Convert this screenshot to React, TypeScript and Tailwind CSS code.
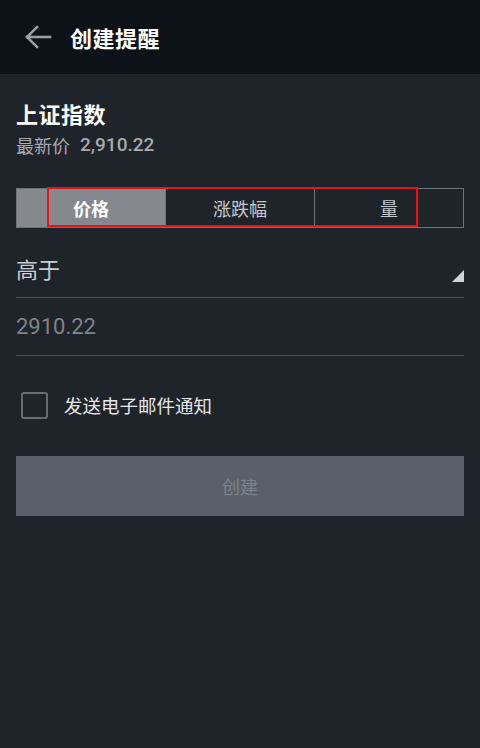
import React, { useState } from 'react'

const cjk = { fontFamily: '"Noto Sans CJK SC", "Noto Sans", sans-serif' }
const num = { fontFamily: 'Roboto, "Noto Sans CJK SC", sans-serif' }

const tabs = ['价格', '涨跌幅', '量']

export default function App() {
  const [active, setActive] = useState(0)
  const [email, setEmail] = useState(false)

  return (
    <div className="w-[480px] h-[748px] bg-[#1f242b] text-white" style={cjk}>
      {/* header */}
      <div className="h-[74px] bg-[#0d1118] flex items-center">
        <button className="ml-[22px] w-[32px] h-[32px] flex items-center justify-center">
          <svg width="28" height="26" viewBox="0 0 28 26" fill="none" stroke="#9a9ea4" strokeWidth="2.6" strokeLinecap="square">
            <path d="M3 13 H26" />
            <path d="M13 3 L3 13 L13 23" strokeLinejoin="miter" />
          </svg>
        </button>
        <h1 className="ml-[16px] text-[22px] font-bold leading-none tracking-[0.5px]">创建提醒</h1>
      </div>

      <div className="px-4">
        <div className="mt-[24px] text-[22px] font-bold leading-[30px] tracking-[0.5px]">上证指数</div>
        <div className="mt-[5px] flex items-center leading-[24px] text-[#a6a9ae]">
          <span className="text-[18px]">最新价</span>
          <span className="ml-[10px] text-[19px] font-medium" style={num}>2,910.22</span>
        </div>

        {/* segmented control */}
        <div className="relative mt-[31px] h-[40px] flex border border-[#6e737a]">
          {tabs.map((t, i) => (
            <button
              key={t}
              onClick={() => setActive(i)}
              className={
                'flex-1 flex items-center justify-center text-[18px] ' +
                (i > 0 ? 'border-l border-[#6e737a] ' : '') +
                (active === i ? 'bg-[#85898f] text-white font-bold' : 'text-[#c3c6ca]')
              }
            >
              {t}
            </button>
          ))}
          <div className="absolute left-[30px] top-[-2px] w-[371px] h-[40px] border-2 border-[#e3141a] pointer-events-none" />
        </div>

        {/* condition */}
        <div className="h-[70px] pt-[12px] flex justify-between border-b border-[#4b5158]">
          <span className="self-center text-[22px] text-[#c9ccd0]">高于</span>
          <svg className="self-end mb-[15px]" width="12" height="12" viewBox="0 0 12 12">
            <path d="M12 0 V12 H0 Z" fill="#d2d3d5" />
          </svg>
        </div>

        {/* value */}
        <div className="h-[58px] flex items-center border-b border-[#4b5158]">
          <span className="text-[22px] text-[#7e838a]" style={num}>2910.22</span>
        </div>

        {/* email */}
        <label className="mt-[36px] h-[27px] flex items-center cursor-pointer" onClick={() => setEmail(!email)}>
          <span className="ml-[5px] w-[27px] h-[27px] rounded-[3px] border-2 border-[#686d74] flex items-center justify-center">
            {email && <span className="w-[13px] h-[13px] bg-[#c9ccd0]" />}
          </span>
          <span className="ml-[16px] text-[18.5px] text-[#e6e7e9]">发送电子邮件通知</span>
        </label>

        <button className="mt-[37px] w-full h-[60px] bg-[#5a606a] flex items-center justify-center text-[18px] text-[#7c828c]">
          创建
        </button>
      </div>
    </div>
  )
}
